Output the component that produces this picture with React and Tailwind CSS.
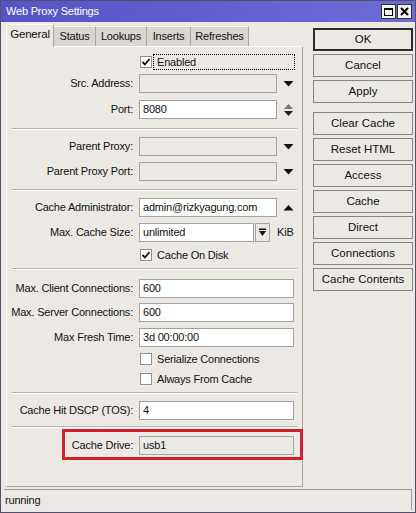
import React from 'react';

const font = "font-['Liberation_Sans',Arial,sans-serif]";

function Down() {
  return (
    <svg width="11" height="7" viewBox="0 0 11 7" className="ml-[6px]">
      <polygon points="0.5,1 10.5,1 5.5,6.5" fill="#111" />
    </svg>
  );
}

function Up() {
  return (
    <svg width="11" height="7" viewBox="0 0 11 7" className="ml-[6px]">
      <polygon points="0.5,6.5 10.5,6.5 5.5,1" fill="#111" />
    </svg>
  );
}

function Spin() {
  return (
    <svg width="11" height="14" viewBox="0 0 11 14" className="ml-[6px]">
      <polygon points="1,6 10,6 5.5,1" fill="#777" />
      <polygon points="1,8 10,8 5.5,13" fill="#222" />
    </svg>
  );
}

function Check({ on }) {
  return (
    <div className="w-[12px] h-[12px] border border-[#8e8f8f] bg-white flex items-center justify-center ml-[1px]">
      {on && (
        <svg width="10" height="10" viewBox="0 0 10 10">
          <path d="M1.5 5 L4 7.5 L8.5 2" stroke="#111" strokeWidth="1.8" fill="none" />
        </svg>
      )}
    </div>
  );
}

function Row({ label, value, width = 'w-[138px]', white = true, after, className = '' }) {
  return (
    <div className={`flex items-center h-[19px] ${className}`}>
      <div className="w-[127px] text-right pr-[1px]">{label}</div>
      <div
        className={`ml-[5px] h-[19px] ${width} border border-[#a2a2a2] flex items-center pl-[3px] ${white ? 'bg-white' : 'bg-[#ebe9e5]'}`}
      >
        {value}
      </div>
      {after}
    </div>
  );
}

function CheckRow({ label, on, className = '' }) {
  return (
    <div className={`flex items-center h-[14px] ${className}`}>
      <div className="w-[132px]" />
      <Check on={on} />
      <div className="ml-[5px]">{label}</div>
    </div>
  );
}

function Sep({ className = '' }) {
  return <div className={`mx-[5px] border-t border-[#b4b2ad] border-b border-b-white ${className}`} />;
}

const buttons = ['OK', 'Cancel', 'Apply', 'Clear Cache', 'Reset HTML', 'Access', 'Cache', 'Direct', 'Connections', 'Cache Contents'];

export default function App() {
  return (
    <div className={`w-[416px] h-[513px] border border-[#50506a] bg-[#ece9e4] flex flex-col text-[11px] tracking-[-0.2px] text-[#111] ${font}`}>
      <div className="h-[21px] bg-gradient-to-r from-[#5454c8] to-[#6c6cd8] flex items-center pl-[5px] pr-[3px] text-white">
        <span className="flex-1">Web Proxy Settings</span>
        <div className="w-[15px] h-[15px] bg-[#f2f2f2] border border-[#333] flex items-center justify-center">
          <div className="w-[9px] h-[8px] border border-black border-t-2" />
        </div>
        <div className="ml-[1px] w-[15px] h-[15px] bg-[#f2f2f2] border border-[#333] flex items-center justify-center">
          <svg width="9" height="9" viewBox="0 0 9 9">
            <path d="M1 1 L8 8 M8 1 L1 8" stroke="#000" strokeWidth="2" />
          </svg>
        </div>
      </div>

      <div className="flex flex-1">
        <div className="pl-[5px] pt-[2px] w-[302px] flex flex-col">
          <div className="flex items-end h-[22px]">
            <div className="relative z-10 -mb-px h-[23px] w-[48px] bg-[#ece9e4] border-l border-t border-white border-r border-r-[#a8a6a1] flex items-center justify-center pb-[3px] text-[11.5px]">
              General
            </div>
            <div className="h-[20px] w-[42px] bg-[#d9d6d1] border-t border-r border-white border-r-[#a8a6a1] flex items-center justify-center">Status</div>
            <div className="h-[20px] w-[51px] bg-[#d9d6d1] border-t border-r border-white border-r-[#a8a6a1] flex items-center justify-center">Lookups</div>
            <div className="h-[20px] w-[44px] bg-[#d9d6d1] border-t border-r border-white border-r-[#a8a6a1] flex items-center justify-center">Inserts</div>
            <div className="h-[20px] w-[58px] bg-[#d9d6d1] border-t border-r border-white border-r-[#a8a6a1] flex items-center justify-center">Refreshes</div>
          </div>
          <div className="h-[441px] border border-white border-r-[#a8a6a1] border-b-[#a8a6a1] flex flex-col">
            <div className="flex items-center h-[16px] mt-[7px]">
              <div className="w-[132px]" />
              <Check on />
              <div className="ml-[1px] w-[142px] h-[16px] border border-dotted border-black flex items-center pl-[3px]">Enabled</div>
            </div>
            <Row className="mt-[4px]" label="Src. Address:" value="" white={false} after={<Down />} />
            <Row className="mt-[7px]" label="Port:" value="8080" after={<Spin />} />
            <Sep className="mt-[9px]" />
            <Row className="mt-[7px]" label="Parent Proxy:" value="" white={false} after={<Down />} />
            <Row className="mt-[6px]" label="Parent Proxy Port:" value="" white={false} after={<Down />} />
            <Sep className="mt-[8px]" />
            <Row className="mt-[7px]" label="Cache Administrator:" value="admin@rizkyagung.com" after={<Up />} />
            <Row
              className="mt-[6px]"
              label="Max. Cache Size:"
              value="unlimited"
              width="w-[115px]"
              after={
                <>
                  <div className="ml-px w-[15px] h-[19px] border border-[#a2a2a2] bg-[#ece9e4] flex items-center justify-center">
                    <svg width="9" height="9" viewBox="0 0 9 9">
                      <rect x="1" y="0.5" width="7" height="1.5" fill="#111" />
                      <polygon points="1,3 8,3 4.5,8" fill="#111" />
                    </svg>
                  </div>
                  <span className="ml-[7px]">KiB</span>
                </>
              }
            />
            <CheckRow className="mt-[6px]" label="Cache On Disk" on />
            <Sep className="mt-[6px]" />
            <Row className="mt-[9px]" label="Max. Client Connections:" value="600" width="w-[155px]" />
            <Row className="mt-[5px]" label="Max. Server Connections:" value="600" width="w-[155px]" />
            <Row className="mt-[6px]" label="Max Fresh Time:" value="3d 00:00:00" width="w-[155px]" />
            <CheckRow className="mt-[5px]" label="Serialize Connections" />
            <CheckRow className="mt-[6px]" label="Always From Cache" />
            <Sep className="mt-[6px]" />
            <Row className="mt-[7px]" label="Cache Hit DSCP (TOS):" value="4" width="w-[155px]" />
            <Sep className="mt-[6px]" />
            <div className="relative mt-[8px]">
              <Row label="Cache Drive:" value="usb1" width="w-[155px]" white={false} />
              <div className="absolute left-[55px] top-[-7px] w-[241px] h-[31px] border-[3px] border-[#d3202c]" />
            </div>
          </div>
        </div>

        <div className="pl-[10px] pt-[6px] w-[110px] flex flex-col tracking-normal text-[11.5px]">
          {buttons.map((b, i) => (
            <div
              key={b}
              className={`h-[23px] w-[100px] flex items-center justify-center bg-[#ece9e4] ${
                i === 0 ? 'border-2 border-[#2a2a2a]' : 'border border-[#858585]'
              } ${i === 0 ? '' : i === 3 ? 'mt-[9px]' : 'mt-[3px]'}`}
            >
              {b}
            </div>
          ))}
        </div>
      </div>

      <div className="mt-px mx-[3px] mb-[2px] h-[21px] border-t border-[#9d9b96] border-r border-r-[#9d9b96] flex items-center pl-[1px]">
        running
      </div>
    </div>
  );
}
